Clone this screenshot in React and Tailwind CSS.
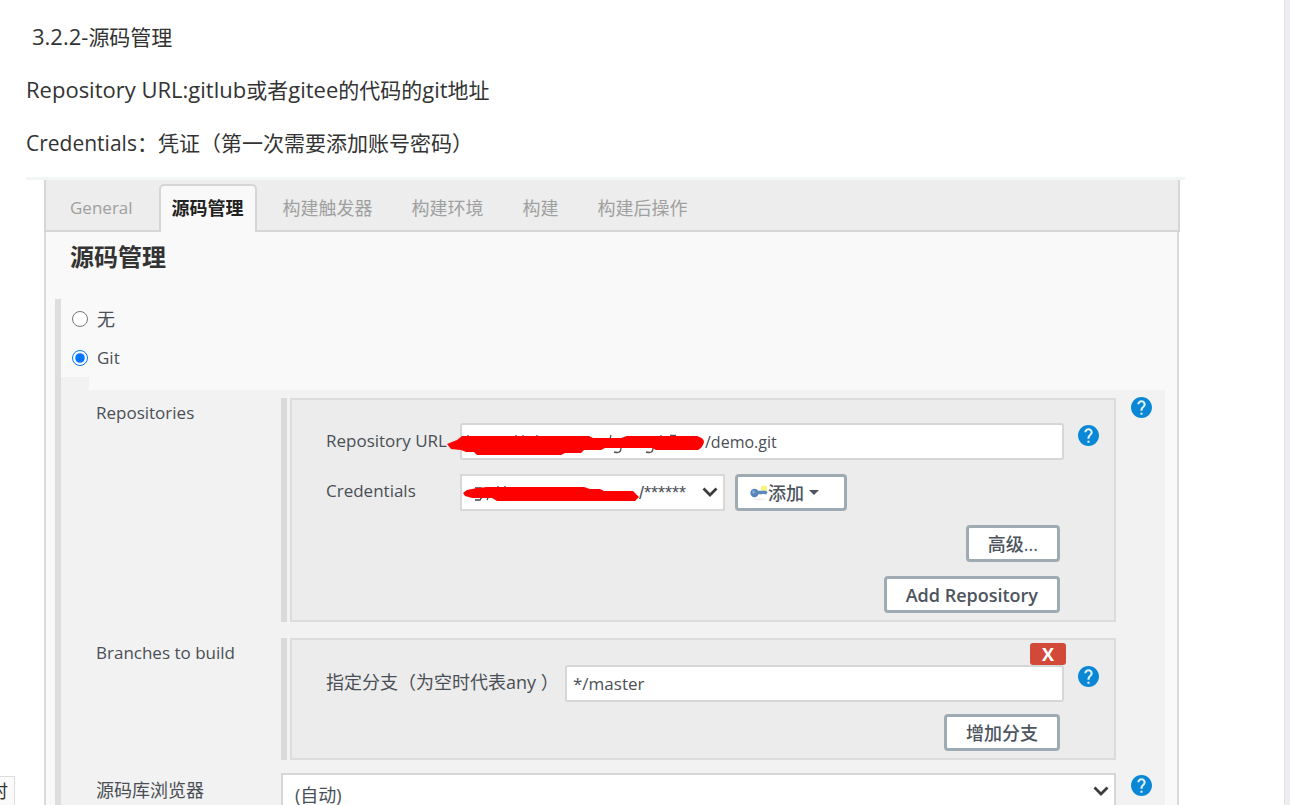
import React, { useState } from "react";

const HelpIcon = ({ className = "" }) => (
  <button type="button" aria-label="Help" className={`block size-[21px] shrink-0 ${className}`}>
    <svg viewBox="0 0 20 20" className="size-full">
      <circle cx="10" cy="10" r="9" fill="#e3f2fb" />
      <path
        fill="#0a88d6"
        d="M10 0C4.48 0 0 4.48 0 10s4.48 10 10 10 10-4.48 10-10S15.52 0 10 0zm1 17H9v-2h2v2zm2.07-7.75l-.9.92C11.45 10.9 11 11.5 11 13H9v-.5c0-1.1.45-2.1 1.17-2.83l1.24-1.26c.37-.36.59-.86.59-1.41 0-1.1-.9-2-2-2s-2 .9-2 2H6c0-2.21 1.79-4 4-4s4 1.79 4 4c0 .88-.36 1.68-.93 2.25z"
      />
    </svg>
  </button>
);

const Chevron = ({ className = "" }) => (
  <svg viewBox="0 0 16 10" className={`pointer-events-none absolute h-[10px] w-[16px] ${className}`}>
    <path d="M1.500 1.500 L8 8 L14.500 1.500" fill="none" stroke="#3c3c3c" strokeWidth="2.800" />
  </svg>
);

const KeyIcon = () => (
  <svg viewBox="0 0 20 18" className="h-[18px] w-[18px] shrink-0">
    <ellipse cx="10" cy="16" rx="7" ry="1.200" fill="#efefef" />
    <circle cx="15.500" cy="4" r="3.400" fill="#f8f27a" />
    <path d="M7 6.500h11l1.500 1.800-1.500 2h-2l-1-.6-1.500.8H7z" fill="#5b89bf" />
    <circle cx="5" cy="9" r="4.600" fill="#5584bb" />
    <circle cx="4" cy="8" r="2" fill="#7fa4cf" />
  </svg>
);

const FormButton = ({ children, className = "px-[19px] font-semibold" }) => (
  <button
    type="button"
    className={`flex h-[37px] items-center rounded-[4px] border-3 border-[#9fabb2] bg-white text-[#4d545d] ${className}`}
  >
    {children}
  </button>
);

const Box = ({ children, className }) => (
  <div className="flex min-w-0 flex-1 gap-[3px]">
    <div className="w-[6px] bg-[#dadada]" />
    <div className={`min-w-0 flex-1 border-2 border-[#dcdcdc] bg-[#ececec] pl-[34px] ${className}`}>
      {children}
    </div>
  </div>
);

const tabs = ["General", "源码管理", "构建触发器", "构建环境", "构建", "构建后操作"];

const App = () => {
  const [tab, setTab] = useState("源码管理");
  const [scm, setScm] = useState("git");

  return (
    <div className="relative h-screen overflow-hidden border-r-[5px] border-[#ededf3] bg-white font-['Open_Sans','Noto_Sans_CJK_SC',sans-serif]">
      <main className="h-full border-r border-[#e2e2e4] pt-[11px] pr-[99px] pl-[26px]">
        <div className="text-[21px] leading-[53px] text-[#333]">
          <h3 className="h-[53px] pl-[6px]">
            <span className="text-[22px] leading-none">3.2.2-</span>源码管理
          </h3>
          <p className="h-[53px]">
            <span className="text-[22px] leading-none">Repository URL:gitlub</span>或者
            <span className="text-[22px] leading-none">gitee</span>的代码的
            <span className="text-[22px] leading-none">git</span>地址
          </p>
          <p className="h-[53px]">Credentials：凭证（第一次需要添加账号密码）</p>
        </div>

        <div className="mt-[7px] h-[3px] bg-[#f3f6f6]" />

        <section className="mr-[5px] ml-[18px] text-[18px] leading-[24px] text-[#4a4f55]">
          <nav className="flex h-[52px] items-end gap-[13px] border-r-2 border-b-2 border-l-2 border-[#d6d6d6] bg-[#ededed] pl-[11px]">
            {tabs.map((name) => (
              <button
                key={name}
                type="button"
                onClick={() => setTab(name)}
                className={
                  tab === name
                    ? "-mb-[2px] h-[48px] rounded-t-[5px] border-x-2 border-t-2 border-[#d6d6d6] bg-[#f9f9f9] px-[11px] pb-[2px] font-bold text-[#222]"
                    : "h-[44px] px-[13px] text-[#a0a0a0] first:text-[17px]"
                }
              >
                {name}
              </button>
            ))}
          </nav>

          <div className="mr-[1px] border-x-2 border-[#dadada] bg-[#f9f9f9] pr-3 pl-[9px]">
            <h2 className="h-[67px] pl-[15px] text-[24px] leading-[50px] font-semibold text-[#333]">源码管理</h2>

            <form className="border-l-6 border-[#dedede]">
              <label className="flex h-[39px] items-center gap-[9px] pl-[11px]">
                <input type="radio" name="scm" className="size-[16px]" checked={scm === "none"} onChange={() => setScm("none")} />
                无
              </label>
              <label className="flex h-[39px] items-center gap-[9px] pl-[11px] text-[17px]">
                <input type="radio" name="scm" className="size-[16px]" checked={scm === "git"} onChange={() => setScm("git")} />
                Git
              </label>

              <div className="h-[13px] w-[28px] bg-[#f2f2f2]" />
              <div className="flex flex-col bg-[#f2f2f2] pt-2 pr-[13px] pb-10 pl-[35px]">
                <div className="flex">
                  <div className="w-[185px] shrink-0 pt-[3px] text-[17px]">Repositories</div>
                  <Box className="flex flex-col gap-[14px] pt-[23px] pb-[7px]">
                    <div className="flex">
                      <label htmlFor="url" className="w-[134px] shrink-0 pt-[6px] text-[17px]">Repository URL</label>
                      <div className="relative min-w-0 flex-1">
                        <input
                          id="url"
                          defaultValue="/demo.git"
                          className="h-[37px] w-full rounded-[3px] border-2 border-[#d6d6d6] bg-white pl-[243px] text-[16px]"
                        />
                        <svg viewBox="0 0 260 36" className="pointer-events-none absolute top-0 -left-[13px] h-[36px] w-[260px]">
                          <path
                            d="M21 12v3M69 12v3M76 12v3M90 12v3M164 12l-1 4M174 25c0 5-3 5-7 4M206 25c0 5-3 5-7 4M214 12v3M223 12.500h6"
                            fill="none"
                            stroke="#555"
                            strokeWidth="1.300"
                          />
                          <path
                            d="M0 21 L5 19 L10 17 L15 13 H142 L146 15 H174 L180 13 H250 Q257 15 257 19 Q256 24 251 27 H209 L205 25 H158 L154 27 H137 L134 30 H118 L114 32 H30 L27 29 H19 L14 27 L4 26 Z"
                            fill="#f00"
                          />
                        </svg>
                      </div>
                      <HelpIcon className="mt-[2px] mr-[15px] ml-[14px]" />
                    </div>
                    <div className="flex">
                      <label htmlFor="credentials" className="w-[134px] shrink-0 pt-[5px] text-[17px]">Credentials</label>
                      <div className="relative w-[265px]">
                        <select
                          id="credentials"
                          className="h-[37px] w-full appearance-none border-2 border-[#d8d8d8] bg-white pl-[177px] font-['Liberation_Sans',sans-serif]"
                        >
                          <option>/******</option>
                        </select>
                        <Chevron className="top-[13px] right-[7px]" />
                        <svg viewBox="0 0 180 36" className="pointer-events-none absolute top-0 left-0 h-[36px] w-[180px]">
                          <path d="M15 14h6q2 4-2 5 5 2 1 7h-5M25 14h7l-5 12M38 12v4M45 12v4" fill="none" stroke="#444" strokeWidth="1.300" />
                          <path
                            d="M3 19 L7 16 L17 14 L28 13 H124 L130 15 H140 L144 17 H173 L179 23 L175 27 H37 L32 24 H12 L5 22 Z"
                            fill="#f00"
                          />
                        </svg>
                      </div>
                      <FormButton className="ml-[10px] w-[112px] pl-[12px] font-medium">
                        <KeyIcon />
                        添加
                        <span className="ml-[5px] border-x-5 border-t-5 border-x-transparent border-t-[#4d545d]" />
                      </FormButton>
                    </div>
                    <div className="flex justify-end pr-[54px]">
                      <FormButton className="px-[19px] font-medium">高级...</FormButton>
                    </div>
                    <div className="flex justify-end pr-[54px]">
                      <FormButton>Add Repository</FormButton>
                    </div>
                  </Box>
                  <HelpIcon className="-mt-[1px] ml-[15px]" />
                </div>

                <div className="mt-4 flex">
                  <div className="w-[185px] shrink-0 pt-[3px] text-[17px]">Branches to build</div>
                  <Box className="pt-[3px] pb-[7px]">
                    <div className="flex justify-end pr-[48px]">
                      <button type="button" className="h-[22px] w-[36px] rounded-[3px] bg-[#d24939] leading-[22px] font-bold text-white">
                        X
                      </button>
                    </div>
                    <div className="flex">
                      <label htmlFor="branch" className="w-[239px] shrink-0 pt-[5px] whitespace-nowrap">指定分支（为空时代表any ）</label>
                      <input
                        id="branch"
                        defaultValue="*/master"
                        className="h-[37px] min-w-0 flex-1 rounded-[3px] border-2 border-[#d6d6d6] bg-white pl-[6px] text-[17px]"
                      />
                      <HelpIcon className="mt-[1px] mr-[15px] ml-[14px]" />
                    </div>
                    <div className="mt-3 flex justify-end pr-[54px]">
                      <FormButton className="px-[19px] font-medium">增加分支</FormButton>
                    </div>
                  </Box>
                  <HelpIcon className="invisible ml-[15px]" />
                </div>

                <div className="mt-[13px] flex">
                  <label htmlFor="browser" className="w-[185px] shrink-0 pt-[5px]">源码库浏览器</label>
                  <div className="relative min-w-0 flex-1">
                    <select
                      id="browser"
                      className="h-[37px] w-full appearance-none border-2 border-[#d6d6d6] bg-white pt-[6px] pl-[12px]"
                    >
                      <option>(自动)</option>
                    </select>
                    <Chevron className="top-[13px] right-[7px]" />
                  </div>
                  <HelpIcon className="mt-[2px] ml-[15px]" />
                </div>
              </div>
            </form>
          </div>
        </section>
      </main>

      <div className="absolute bottom-0 left-0 flex h-[29px] w-[15px] justify-end overflow-hidden border-t border-r border-[#ddd] bg-[#fafafa] pr-[6px] text-[18px] leading-[29px] text-[#333]">
        时
      </div>
    </div>
  );
};

export default App;
